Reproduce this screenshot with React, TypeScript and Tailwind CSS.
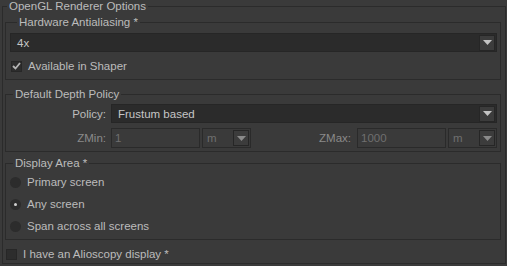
import type { ReactNode } from 'react'

const font = "font-['Liberation_Sans',_Arial,_sans-serif]"

function Arrow({ disabled = false }: { disabled?: boolean }) {
  return (
    <span className="grid h-[16px] w-[16px] place-items-center border border-[#262626] bg-[#3c3c3c]">
      <svg width="9" height="5" viewBox="0 0 9 5" aria-hidden="true">
        <path d="M0 0h9L4.5 5z" fill={disabled ? '#8a8a8a' : '#c4c4c4'} />
      </svg>
    </span>
  )
}

function Select({ value, className = '' }: { value: string; className?: string }) {
  return (
    <div className={`flex items-center justify-between border border-[#262626] bg-[#2b2b2b] pl-[6px] pr-[1px] text-[#c6c6c6] ${className}`}>
      <span>{value}</span>
      <Arrow />
    </div>
  )
}

function UnitSelect() {
  return (
    <div className="flex h-[20px] w-[49px] items-center justify-between border border-[#2a2a2a] bg-[#3a3a3a] pl-[4px] pr-[1px] text-[#6f6f6f]">
      <span>m</span>
      <Arrow disabled />
    </div>
  )
}

function Checkbox({ checked = false }: { checked?: boolean }) {
  return (
    <span className="grid h-[11px] w-[11px] place-items-center border border-[#272727] bg-[#2d2d2d]">
      {checked && (
        <svg width="9" height="8" viewBox="0 0 9 8" aria-hidden="true">
          <path d="M1 4l2.5 2.5L8 1" stroke="#b4b4b4" strokeWidth="1.8" fill="none" />
        </svg>
      )}
    </span>
  )
}

function Radio({ label, checked = false }: { label: string; checked?: boolean }) {
  return (
    <div className="flex h-[22px] items-center gap-[6px] pl-[4px]">
      <span className="grid h-[11px] w-[11px] place-items-center rounded-full bg-[#2c2c2c]">
        {checked && <span className="h-[3px] w-[3px] rounded-full bg-[#d0d0d0]" />}
      </span>
      <span>{label}</span>
    </div>
  )
}

function Group({ title, className = '', children }: { title: string; className?: string; children: ReactNode }) {
  return (
    <fieldset className={`ml-[2px] w-[496px] border border-[#2b2b2b] ${className}`}>
      <legend className="ml-[7px] px-[2px] leading-[13px]">{title}</legend>
      {children}
    </fieldset>
  )
}

export default function App() {
  return (
    <div className={`h-[266px] w-[507px] bg-[#3a3a3a] pl-[2px] text-[11.5px] leading-[14px] text-[#bcbcbc] ${font}`}>
      <fieldset className="h-[264px] w-[504px] border border-[#2b2b2b]">
        <legend className="ml-[4px] px-[2px] leading-[13px]">OpenGL Renderer Options</legend>

        <Group title="Hardware Antialiasing *" className="mt-[3px] pb-[6px] pl-[4px] pr-[3px]">
          <Select value="4x" className="mt-[4px] h-[19px]" />
          <div className="mt-[7px] flex h-[14px] items-center gap-[6px] pl-[1px]">
            <Checkbox checked />
            <span>Available in Shaper</span>
          </div>
        </Group>

        <Group title="Default Depth Policy" className="mt-[8px] pb-[3px] pr-[3px]">
          <div className="mt-[3px] flex items-center">
            <span className="w-[100px] text-right">Policy:</span>
            <Select value="Frustum based" className="ml-[5px] h-[19px] flex-1" />
          </div>
          <div className="mt-[5px] flex items-center">
            <span className="w-[100px] text-right text-[#8a8a8a]">ZMin:</span>
            <div className="ml-[5px] flex h-[20px] w-[89px] items-center border border-[#2a2a2a] pl-[3px] text-[#6f6f6f]">1</div>
            <div className="ml-[2px]"><UnitSelect /></div>
            <span className="flex-1 pr-[6px] text-right text-[#8a8a8a]">ZMax:</span>
            <div className="flex h-[20px] w-[89px] items-center border border-[#2a2a2a] pl-[3px] text-[#6f6f6f]">1000</div>
            <div className="ml-[2px]"><UnitSelect /></div>
          </div>
        </Group>

        <Group title="Display Area *" className="mt-[5px] pb-[2px]">
          <div className="pt-[1px]">
            <Radio label="Primary screen" />
            <Radio label="Any screen" checked />
            <Radio label="Span across all screens" />
          </div>
        </Group>

        <div className="mt-[7px] flex h-[14px] items-center gap-[6px] pl-[3px]">
          <Checkbox />
          <span>I have an Alioscopy display *</span>
        </div>
      </fieldset>
    </div>
  )
}
